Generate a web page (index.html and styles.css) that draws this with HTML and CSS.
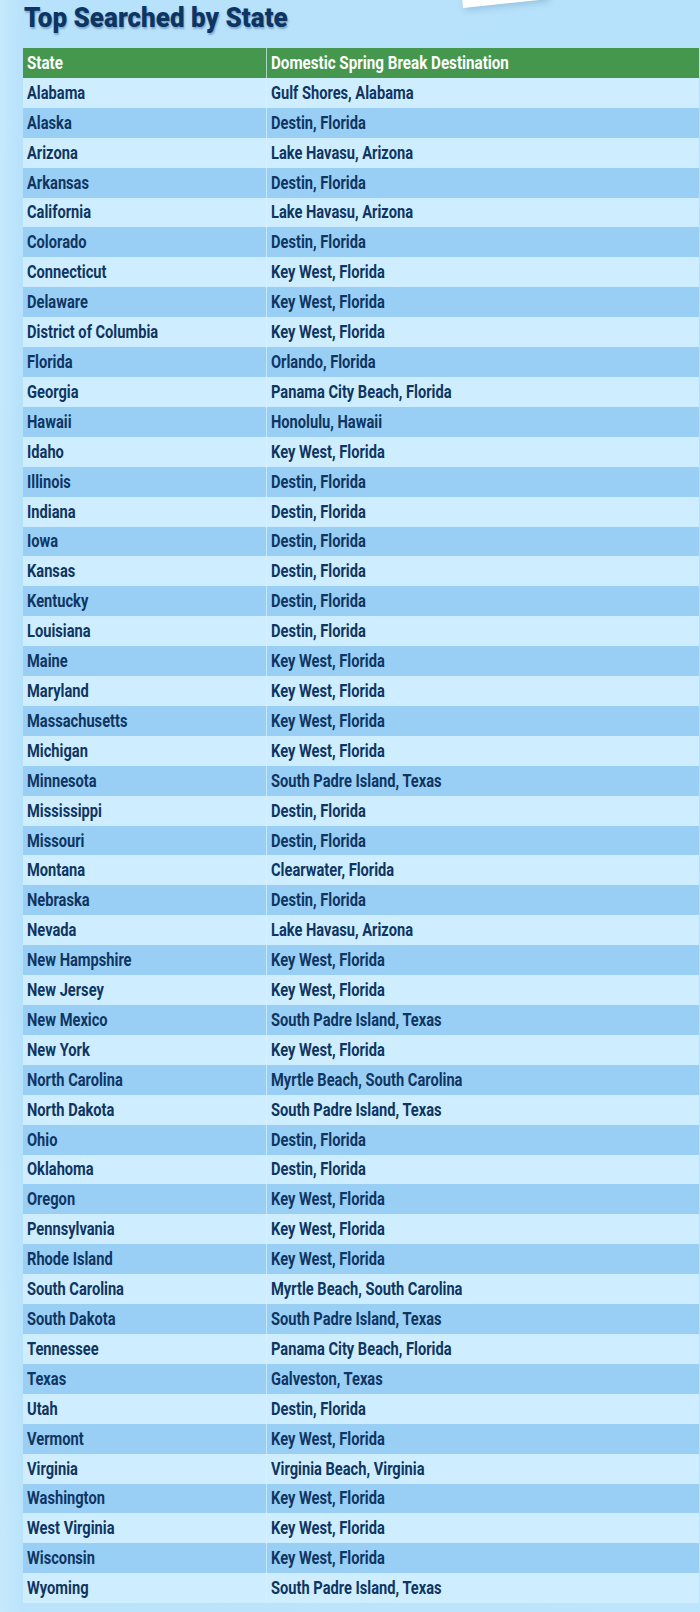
FILE: index.html
```html
<!DOCTYPE html>
<html>
<head>
<meta charset="utf-8">
<link rel="stylesheet" href="styles.css">
</head>
<body>
<div class="page">
  <div class="paper"></div>
  <h1 class="title"><span class="tt">Top Searched by State</span></h1>
  <table class="tbl">
    <thead>
      <tr><th class="c1"><span class="t">State</span></th><th class="c2"><span class="t">Domestic Spring Break Destination</span></th></tr>
    </thead>
    <tbody>
      <tr><td><span class="t">Alabama</span></td><td><span class="t">Gulf Shores, Alabama</span></td></tr>
      <tr><td><span class="t">Alaska</span></td><td><span class="t">Destin, Florida</span></td></tr>
      <tr><td><span class="t">Arizona</span></td><td><span class="t">Lake Havasu, Arizona</span></td></tr>
      <tr><td><span class="t">Arkansas</span></td><td><span class="t">Destin, Florida</span></td></tr>
      <tr><td><span class="t">California</span></td><td><span class="t">Lake Havasu, Arizona</span></td></tr>
      <tr><td><span class="t">Colorado</span></td><td><span class="t">Destin, Florida</span></td></tr>
      <tr><td><span class="t">Connecticut</span></td><td><span class="t">Key West, Florida</span></td></tr>
      <tr><td><span class="t">Delaware</span></td><td><span class="t">Key West, Florida</span></td></tr>
      <tr><td><span class="t">District of Columbia</span></td><td><span class="t">Key West, Florida</span></td></tr>
      <tr><td><span class="t">Florida</span></td><td><span class="t">Orlando, Florida</span></td></tr>
      <tr><td><span class="t">Georgia</span></td><td><span class="t">Panama City Beach, Florida</span></td></tr>
      <tr><td><span class="t">Hawaii</span></td><td><span class="t">Honolulu, Hawaii</span></td></tr>
      <tr><td><span class="t">Idaho</span></td><td><span class="t">Key West, Florida</span></td></tr>
      <tr><td><span class="t">Illinois</span></td><td><span class="t">Destin, Florida</span></td></tr>
      <tr><td><span class="t">Indiana</span></td><td><span class="t">Destin, Florida</span></td></tr>
      <tr><td><span class="t">Iowa</span></td><td><span class="t">Destin, Florida</span></td></tr>
      <tr><td><span class="t">Kansas</span></td><td><span class="t">Destin, Florida</span></td></tr>
      <tr><td><span class="t">Kentucky</span></td><td><span class="t">Destin, Florida</span></td></tr>
      <tr><td><span class="t">Louisiana</span></td><td><span class="t">Destin, Florida</span></td></tr>
      <tr><td><span class="t">Maine</span></td><td><span class="t">Key West, Florida</span></td></tr>
      <tr><td><span class="t">Maryland</span></td><td><span class="t">Key West, Florida</span></td></tr>
      <tr><td><span class="t">Massachusetts</span></td><td><span class="t">Key West, Florida</span></td></tr>
      <tr><td><span class="t">Michigan</span></td><td><span class="t">Key West, Florida</span></td></tr>
      <tr><td><span class="t">Minnesota</span></td><td><span class="t">South Padre Island, Texas</span></td></tr>
      <tr><td><span class="t">Mississippi</span></td><td><span class="t">Destin, Florida</span></td></tr>
      <tr><td><span class="t">Missouri</span></td><td><span class="t">Destin, Florida</span></td></tr>
      <tr><td><span class="t">Montana</span></td><td><span class="t">Clearwater, Florida</span></td></tr>
      <tr><td><span class="t">Nebraska</span></td><td><span class="t">Destin, Florida</span></td></tr>
      <tr><td><span class="t">Nevada</span></td><td><span class="t">Lake Havasu, Arizona</span></td></tr>
      <tr><td><span class="t">New Hampshire</span></td><td><span class="t">Key West, Florida</span></td></tr>
      <tr><td><span class="t">New Jersey</span></td><td><span class="t">Key West, Florida</span></td></tr>
      <tr><td><span class="t">New Mexico</span></td><td><span class="t">South Padre Island, Texas</span></td></tr>
      <tr><td><span class="t">New York</span></td><td><span class="t">Key West, Florida</span></td></tr>
      <tr><td><span class="t">North Carolina</span></td><td><span class="t">Myrtle Beach, South Carolina</span></td></tr>
      <tr><td><span class="t">North Dakota</span></td><td><span class="t">South Padre Island, Texas</span></td></tr>
      <tr><td><span class="t">Ohio</span></td><td><span class="t">Destin, Florida</span></td></tr>
      <tr><td><span class="t">Oklahoma</span></td><td><span class="t">Destin, Florida</span></td></tr>
      <tr><td><span class="t">Oregon</span></td><td><span class="t">Key West, Florida</span></td></tr>
      <tr><td><span class="t">Pennsylvania</span></td><td><span class="t">Key West, Florida</span></td></tr>
      <tr><td><span class="t">Rhode Island</span></td><td><span class="t">Key West, Florida</span></td></tr>
      <tr><td><span class="t">South Carolina</span></td><td><span class="t">Myrtle Beach, South Carolina</span></td></tr>
      <tr><td><span class="t">South Dakota</span></td><td><span class="t">South Padre Island, Texas</span></td></tr>
      <tr><td><span class="t">Tennessee</span></td><td><span class="t">Panama City Beach, Florida</span></td></tr>
      <tr><td><span class="t">Texas</span></td><td><span class="t">Galveston, Texas</span></td></tr>
      <tr><td><span class="t">Utah</span></td><td><span class="t">Destin, Florida</span></td></tr>
      <tr><td><span class="t">Vermont</span></td><td><span class="t">Key West, Florida</span></td></tr>
      <tr><td><span class="t">Virginia</span></td><td><span class="t">Virginia Beach, Virginia</span></td></tr>
      <tr><td><span class="t">Washington</span></td><td><span class="t">Key West, Florida</span></td></tr>
      <tr><td><span class="t">West Virginia</span></td><td><span class="t">Key West, Florida</span></td></tr>
      <tr><td><span class="t">Wisconsin</span></td><td><span class="t">Key West, Florida</span></td></tr>
      <tr><td><span class="t">Wyoming</span></td><td><span class="t">South Padre Island, Texas</span></td></tr>
    </tbody>
  </table>
</div>
</body>
</html>
```

FILE: styles.css
```css
html, body {
  margin: 0;
  padding: 0;
}
body {
  width: 700px;
  height: 1612px;
  overflow: hidden;
  background: #b4e0fa;
  font-family: Roboto, "Liberation Sans", sans-serif;
}
.page {
  position: relative;
  width: 700px;
  height: 1612px;
  background:
    linear-gradient(90deg, rgba(215, 240, 255, 0.45) 0px, rgba(215, 240, 255, 0) 22px),
    linear-gradient(160deg, #b8e2fb 0%, #b3e0fa 50%, #bde5fc 100%);
  padding-top: 1px;
  box-sizing: border-box;
}
.paper {
  position: absolute;
  left: 463px;
  top: -20px;
  width: 84px;
  height: 28px;
  background: #ffffff;
  transform: rotate(-6deg);
  transform-origin: left bottom;
  box-shadow: 2px 3px 6px rgba(60, 110, 150, 0.25);
}
.title {
  margin: 0 0 0 24px;
  padding: 0;
  height: 47px;
  font-family: Roboto, "Liberation Sans", sans-serif;
  font-weight: 900;
  font-size: 28px;
  line-height: 34px;
  color: #0d3563;
  text-shadow: 1px 2px 2px rgba(20, 60, 110, 0.35);
}
.tt {
  display: inline-block;
  transform: scaleX(0.93);
  transform-origin: 0 50%;
  white-space: nowrap;
}
.tbl {
  margin-left: 23px;
  width: 676px;
  border-collapse: collapse;
  table-layout: fixed;
}
.tbl th, .tbl td {
  height: 29.92px;
  padding: 0 0 0 4px;
  text-align: left;
  vertical-align: middle;
  font-size: 18.5px;
  line-height: 20px;
  white-space: nowrap;
  box-sizing: border-box;
}
.t {
  display: inline-block;
  transform: scaleX(0.792);
  transform-origin: 0 50%;
}
.tbl th {
  background: #45974e;
  color: #ffffff;
  font-weight: 700;
}
.tbl th .t { transform: scaleX(0.82); }
.tbl th.c1 { width: 243px; }
.tbl td {
  color: #0f3562;
  font-weight: 700;
}
.tbl th + th, .tbl td + td {
  border-left: 1px solid rgba(215, 242, 255, 0.7);
}
.tbl tbody tr:nth-child(odd) td { background: #ceeeff; }
.tbl tbody tr:nth-child(even) td { background: #99cff5; }
```
